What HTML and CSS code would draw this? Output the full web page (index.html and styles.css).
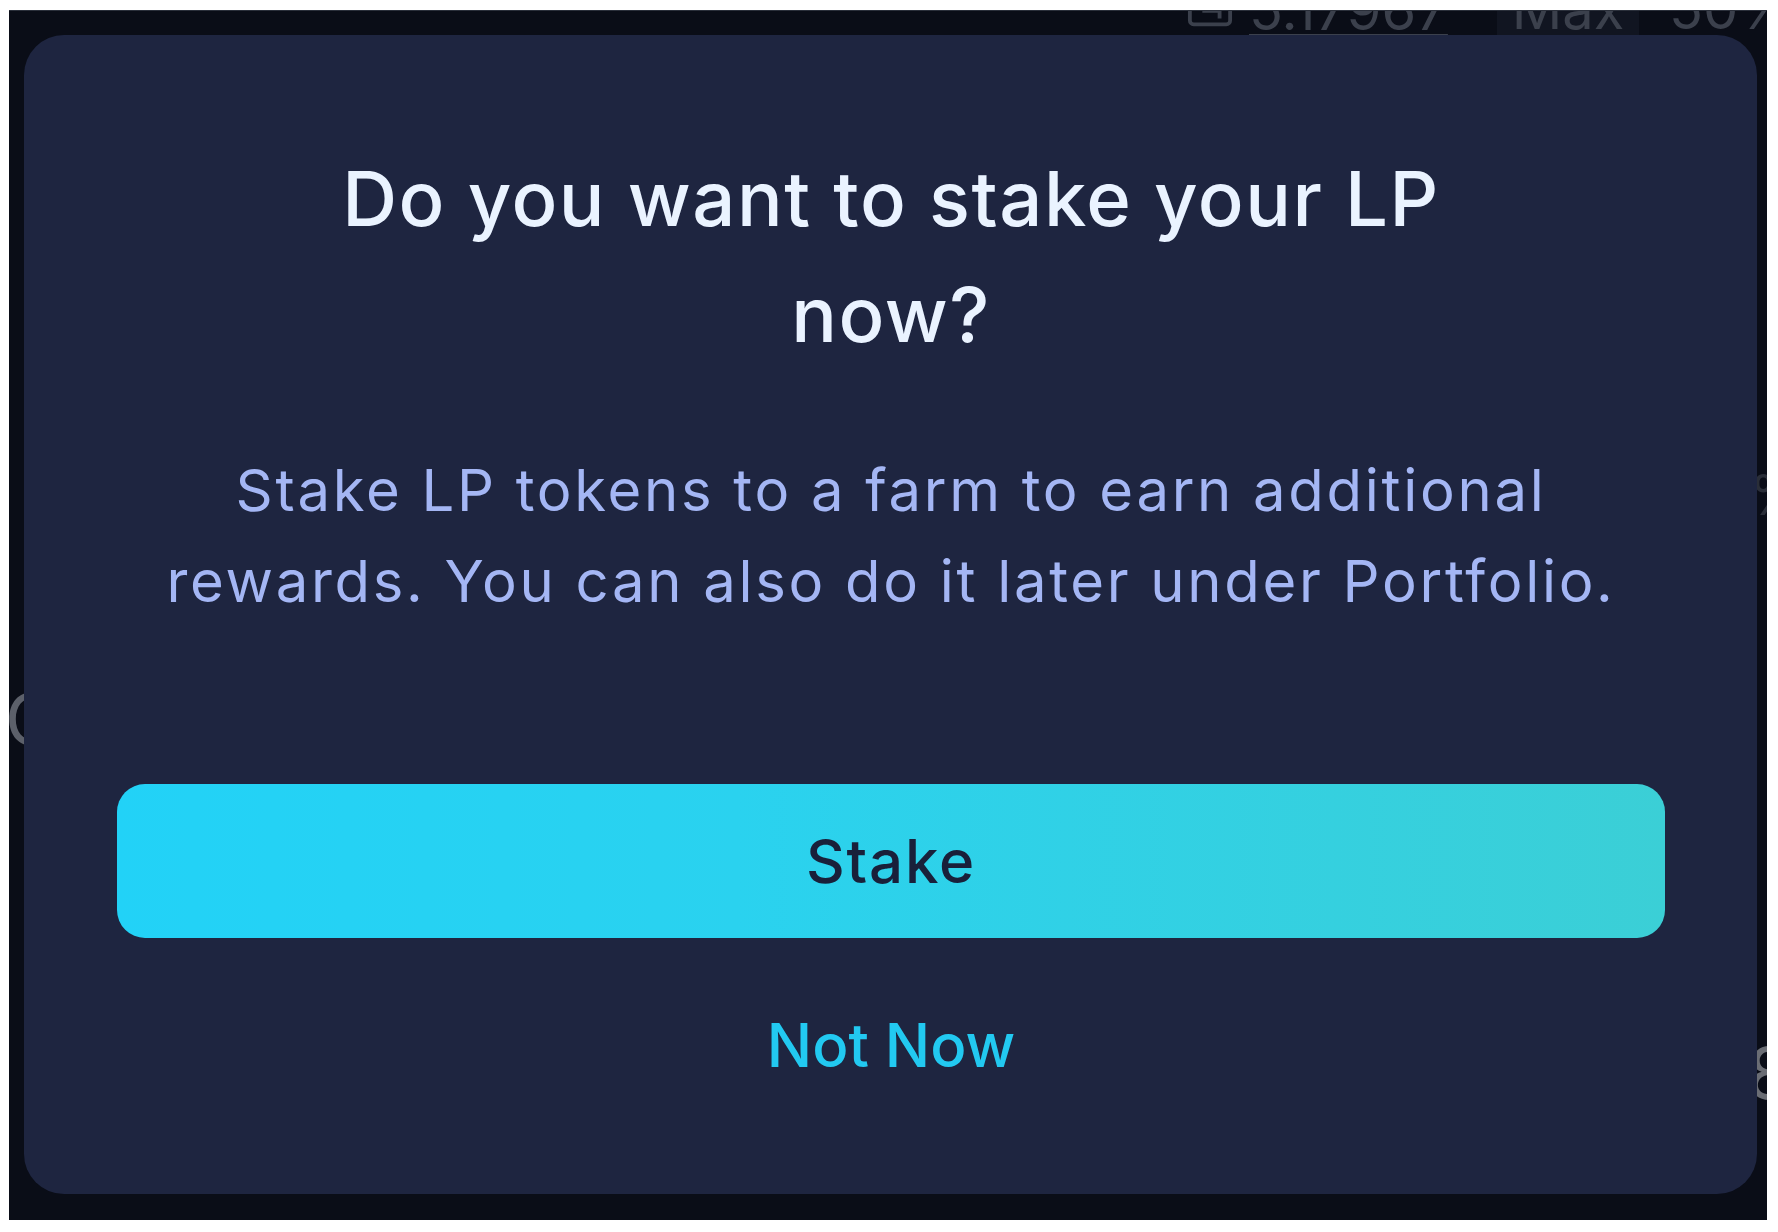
FILE: index.html
```html
<!DOCTYPE html>
<html lang="en">
<head>
<meta charset="utf-8">
<title>Stake LP</title>
<link rel="stylesheet" href="styles.css">
</head>
<body>
<div class="frame">
  <div class="behind">
    <div class="bal">
      <svg class="bal-icon" viewBox="0 0 48 40" width="46" height="40"><rect x="3" y="-10" width="42" height="46" rx="4" fill="none" stroke="#3b404c" stroke-width="4"/><path d="M16 22h18v8" fill="none" stroke="#3b404c" stroke-width="4"/></svg>
      <span class="bal-num">5.17967</span>
    </div>
    <div class="max">Max</div>
    <div class="pct">50%</div>
    <div class="ghost ghost-c">C</div>
    <div class="ghost ghost-8">8</div>
    <div class="ghost ghost-p">%</div>
  </div>
  <div class="modal">
    <h1 class="title">Do you want to stake your LP now?</h1>
    <p class="desc">Stake LP tokens to a farm to earn additional rewards. You can also do it later under Portfolio.</p>
    <button class="stake">Stake</button>
    <button class="later">Not Now</button>
  </div>
</div>
</body>
</html>
```
FILE: styles.css
```css
* { box-sizing: border-box; }
html, body { margin: 0; padding: 0; background: #ffffff; }
body {
  width: 1778px;
  height: 1232px;
  padding: 10px 11px 12px 9px;
  font-family: Inter, "Noto Sans", sans-serif;
}
.frame {
  position: relative;
  width: 1758px;
  height: 1210px;
  background: #0a0d17;
  border-top: 1px solid #2a2f3a;
  overflow: hidden;
  padding: 24px 10px 0 15px;
}
.behind { position: absolute; inset: 0; }
.bal {
  position: absolute;
  left: 1178px;
  top: -26px;
  display: flex;
  align-items: flex-end;
  gap: 16px;
  color: #3b404c;
}
.bal-icon { margin-bottom: 6px; }
.bal-num {
  font-size: 56px;
  line-height: 50px;
  text-decoration: underline;
  text-decoration-thickness: 2px;
  text-underline-offset: 4px;
}
.max {
  position: absolute;
  left: 1488px;
  top: -24px;
  width: 142px;
  height: 48px;
  background: #111521;
  color: #3b404c;
  font-size: 56px;
  line-height: 44px;
  text-align: center;
}
.pct {
  position: absolute;
  left: 1660px;
  top: -24px;
  color: #3b404c;
  font-size: 56px;
  line-height: 44px;
}
.ghost {
  position: absolute;
  color: #5c606a;
  font-size: 72px;
  line-height: 1;
}
.ghost-c { left: -4px; top: 672px; }
.ghost-8 { left: 1738px; top: 1026px; color: #6a6d74; }
.ghost-p { left: 1740px; top: 456px; color: #2a2e38; font-size: 56px; }

.modal {
  position: relative;
  width: 1733px;
  height: 1159px;
  background: #1e2540;
  border-radius: 40px;
  padding: 105px 92px 0 93px;
  display: flex;
  flex-direction: column;
  align-items: center;
}
.title {
  margin: 0;
  max-width: 1200px;
  font-size: 76px;
  line-height: 116px;
  font-weight: 500;
  color: #eaf3ff;
  text-align: center;
  letter-spacing: 1.5px;
}
.desc {
  margin: 73px 0 0;
  font-size: 58px;
  line-height: 91px;
  font-weight: 400;
  color: #a4b6f4;
  text-align: center;
  letter-spacing: 2.7px;
}
.stake {
  margin-top: 157px;
  width: 100%;
  height: 154px;
  border: 0;
  border-radius: 28px;
  background: linear-gradient(90deg, #22d2f7 0%, #2ad2ef 40%, #3bcfd6 100%);
  color: #19203a;
  font-family: inherit;
  font-size: 60px;
  font-weight: 500;
  letter-spacing: 1.8px;
  cursor: pointer;
}
.later {
  margin-top: 62px;
  border: 0;
  background: none;
  padding: 0;
  color: #22c9f1;
  font-family: inherit;
  font-size: 60px;
  line-height: 91px;
  font-weight: 500;
  cursor: pointer;
}
```
